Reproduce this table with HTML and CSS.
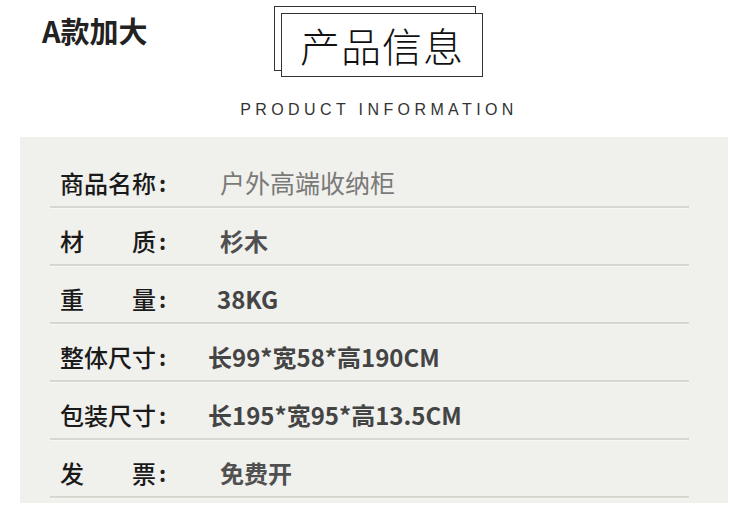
FILE: index.html
```html
<!DOCTYPE html>
<html lang="zh-CN">
<head>
  <meta charset="UTF-8" />
  <meta name="viewport" content="width=device-width, initial-scale=1.0"/>
  <title>产品信息</title>
  <link rel="stylesheet" href="styles.css">
</head>
<body>
  <div class="header">
    <div class="top">
      <div class="brand">A款加大</div>
      <div class="title-wrap">
        <div class="title">产品信息</div>
      </div>
    </div>
    <div class="subtitle">PRODUCT INFORMATION</div>
  </div>

  <div class="panel">
    <div class="row">
      <div class="label"><span>商品名称</span></div><span class="colon">:</span>
      <div class="value light indent">户外高端收纳柜</div>
    </div>
    <div class="row">
      <div class="label"><span>材</span><span>质</span></div><span class="colon">:</span>
      <div class="value medium indent">杉木</div>
    </div>
    <div class="row">
      <div class="label"><span>重</span><span>量</span></div><span class="colon">:</span>
      <div class="value indent-sm">38KG</div>
    </div>
    <div class="row">
      <div class="label"><span>整体尺寸</span></div><span class="colon">:</span>
      <div class="value">长99*宽58*高190CM</div>
    </div>
    <div class="row">
      <div class="label"><span>包装尺寸</span></div><span class="colon">:</span>
      <div class="value">长195*宽95*高13.5CM</div>
    </div>
    <div class="row">
      <div class="label"><span>发</span><span>票</span></div><span class="colon">:</span>
      <div class="value medium indent">免费开</div>
    </div>
  </div>
</body>
</html>
```

FILE: styles.css
```css
body {
  margin: 0;
  background: #fff;
  font-family: "Noto Sans CJK SC", "Noto Sans", sans-serif;
  color: #222;
}

.header {
  height: 137px;
}

.top {
  display: flex;
  align-items: flex-start;
  padding-top: 6px;
}

.brand {
  margin-left: 42px;
  margin-top: 10px;
  width: 232px;
  font-size: 29px;
  font-weight: bold;
  line-height: 1;
  color: #222;
}

.title-wrap {
  position: relative;
  padding: 7px 0 0 7px;
}

.title-wrap::before {
  content: "";
  position: absolute;
  left: 0;
  top: 0;
  width: 200px;
  height: 63px;
  border: 1px solid #333;
}

.title {
  position: relative;
  width: 200px;
  height: 62px;
  border: 1px solid #333;
  background: #fff;
  display: flex;
  align-items: center;
  justify-content: center;
  font-size: 40px;
  font-weight: 300;
  letter-spacing: 1px;
  color: #111;
}

.subtitle {
  margin-top: 25px;
  text-align: center;
  padding-left: 8px;
  font-family: "Liberation Sans Narrow", "Liberation Sans", sans-serif;
  font-size: 16px;
  letter-spacing: 4.4px;
  line-height: 1;
  color: #333;
}

.panel {
  margin: 0 22px 0 20px;
  background: #f0f0ed;
  padding: 13px 39px 5px 30px;
}

.row {
  box-sizing: border-box;
  display: flex;
  align-items: center;
  height: 58px;
  padding: 8px 0 0 10px;
  border-bottom: 2px solid #d7d7d2;
  box-shadow: 0 1px 0 #f7f7f5;
}

.label {
  display: flex;
  justify-content: space-between;
  width: 96px;
  font-size: 24px;
  font-weight: 500;
  color: #1a1a1a;
}

.colon {
  box-sizing: border-box;
  font-size: 22px;
  font-weight: bold;
  width: 52px;
  padding-left: 3px;
  color: #222;
}

.value {
  font-size: 24px;
  font-weight: bold;
  color: #444;
}

.value.light {
  font-size: 25px;
  font-weight: normal;
  color: #7a7a78;
}

.value.medium {
  color: #505050;
}

.indent {
  margin-left: 12px;
}

.indent-sm {
  margin-left: 9px;
}
```
